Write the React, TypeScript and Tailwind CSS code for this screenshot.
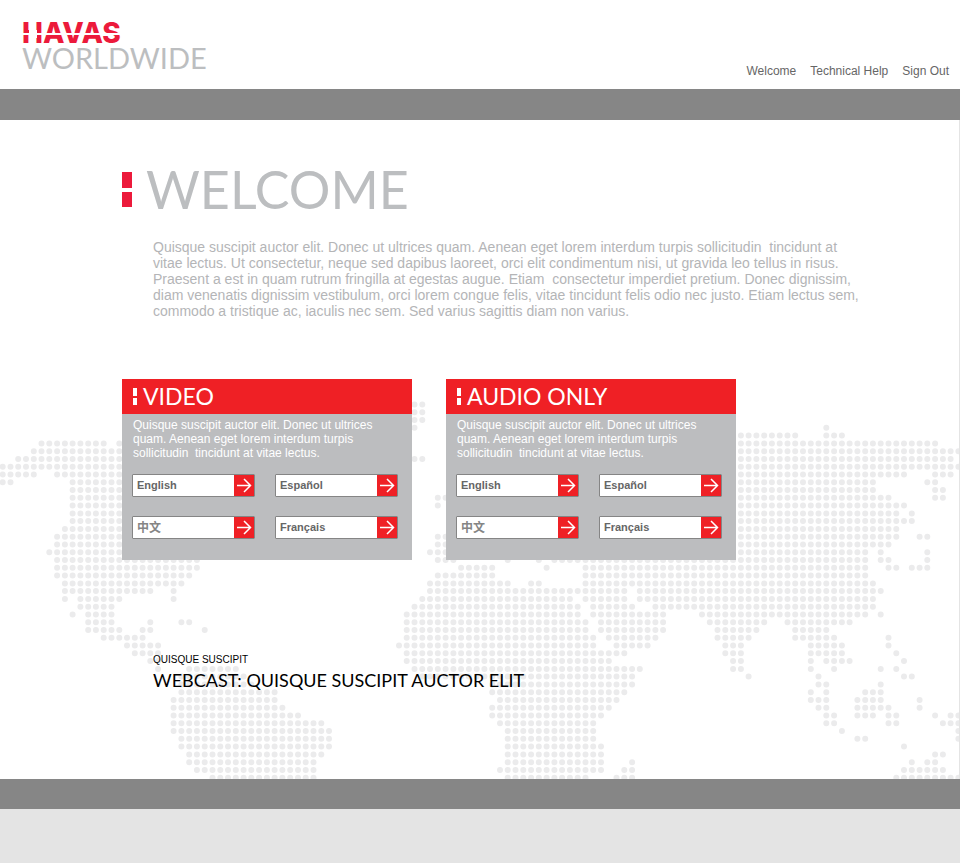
const RUNS: Record<number, string> = {
  [-5]: "53-54", [-4]: "53-54", [-3]: "53-54",
  [-2]: "53 106", [-1]: "95-102 106-108",
  0: "5-13 15 95-120", 1: "4-15 95-123", 2: "2-15 53-54 95-122", 3: "0-15 95-123",
  4: "0-4 7-15 95-116 120-122", 5: "0-1 9-15 95-112 119-120", 6: "9-15 95-112 120-121",
  7: "9-15 56-57 95-114 120-121", 8: "9-15 56 95-116", 9: "9-15 95-115 117", 10: "9-15 95-117",
  11: "8-15 95-115", 12: "7-15 56-57 95-115 118-119", 13: "7-15 56-57 95-114",
  14: "6-15 55-57 95-111 113 119",
  15: "7-25 56-58 65 69 71-111 113-114 119",
  16: "7-25 59-63 70 75-111 114-115 117-119",
  17: "7-24 56-63 75-111", 18: "8-23 55-65 68-69 75-112",
  19: "8-19 22 55-80 82-113", 20: "8 10-15 22 54-73 75-80 82-112",
  21: "10-14 53-74 76-81 84-112", 22: "9 11-14 52-74 76-85 90-111 113",
  23: "11-14 19 23-24 52-75 77-85 91-98 101-109",
  24: "11-15 18-19 26 52-75 77-85 92-97 102-106",
  25: "13-18 52-76 78-84 92-96 102-107 114",
  26: "16-20 51-76 79-83 93-95 104-108 114",
  27: "17-20 52-80 93-95 104-108 115", 28: "19-20 52-78 94-95 104 106-109 116",
  29: "20 24-30 53-82 94-95 104 107 113 115",
  30: "23-31 54-81 96 105 116-117", 31: "23-32 63-81 105-106 113",
  32: "23-35 63-80 104 106 111-113", 33: "22-35 64-79 104-106 110-113 118",
  34: "22-36 63-78 105-106 110-114 118", 35: "22-38 63-77 106-107 110-112 114-115 120 122-123",
  36: "22-41 64-76 106-107 114-115 121-123", 37: "22-42 65-76 108 123",
  38: "23-42 65-76 110-111 123", 39: "23-42 65-77 116", 40: "24-41 65-77 120-121",
  41: "24-40 65-77 81 117 119-120", 42: "25-40 64-77 80-81 116-121",
  43: "27-40 65-75 79-81 115-123",
};

function mapPath() {
  const parts: string[] = [];
  for (const [row, runs] of Object.entries(RUNS)) {
    const y = (323.4 + Number(row) * 7.775).toFixed(1);
    for (const run of runs.split(" ")) {
      const [from, to = from] = run.split("-").map(Number);
      for (let c = from; c <= to; c++) parts.push(`M${(2.7 + c * 7.77).toFixed(1)} ${y}h0`);
    }
  }
  return parts.join("");
}

const MAP = mapPath();

function WorldMap() {
  return (
    <svg aria-hidden="true" className="absolute inset-0 h-full w-full" fill="none">
      <path d={MAP} stroke="#ebebec" strokeWidth="6" strokeLinecap="round" />
    </svg>
  );
}

function Logo() {
  return (
    <span className="relative block">
      <span className="block font-['Inter',sans-serif] text-[28px] leading-[25px] font-extrabold text-[#ec1a3b]">HAVAS</span>
      <span className="block font-['Lato',sans-serif] text-[29px] leading-6 text-[#bcbec0]">WORLDWIDE</span>
      <span className="absolute top-3 left-0 h-[2px] w-[106px] bg-white" />
      <span className="absolute top-[9px] left-[7px] h-2 w-2 bg-white" />
    </span>
  );
}

function Arrow() {
  return (
    <span className="flex w-5 items-center justify-center bg-[#ef2025]">
      <svg aria-hidden="true" width="16" height="15" viewBox="0 0 16 15" fill="none" stroke="#fff" strokeWidth="1.500">
        <path d="M1 7.500h13M8 1l6.500 6.500L8 14" />
      </svg>
    </span>
  );
}

const LANGUAGES = ["English", "Español", "中文", "Français"];

function Card({ title }: { title: string }) {
  return (
    <section className="w-[290px] bg-[#bcbdbf] pb-[21px]">
      <h2 className="flex h-[35px] items-center gap-[6px] bg-[#ef2025] pl-[11px] font-['Lato',sans-serif] text-[23px] font-normal text-white">
        <span aria-hidden="true" className="flex flex-col gap-[2px]">
          <span className="h-2 w-1 bg-white" />
          <span className="h-[7px] w-1 bg-white" />
        </span>
        {title}
      </h2>
      <p className="mt-1 pr-6 pl-[11px] text-[12px] leading-[14px] whitespace-pre-line text-white">
        Quisque suscipit auctor elit. Donec ut ultrices{"\n"}quam. Aenean eget lorem interdum turpis{"\n"}sollicitudin&nbsp; tincidunt at vitae lectus.
      </p>
      <div className="mt-[14px] grid grid-cols-2 gap-x-5 gap-y-[19px] pr-[14px] pl-[10px]">
        {LANGUAGES.map((name) => (
          <button key={name} className="flex h-[23px] rounded-[1px] border border-[#858585] bg-white text-left">
            <span
              className={
                name === "中文"
                  ? "flex h-full flex-1 items-center pl-1 text-[12px] font-bold text-[#858585]"
                  : "flex h-full flex-1 items-center pl-1 text-[11px] font-bold text-[#666]"
              }
            >
              {name}
            </span>
            <Arrow />
          </button>
        ))}
      </div>
    </section>
  );
}

export default function App() {
  return (
    <div className="min-h-screen bg-[#e4e4e4] font-['Liberation_Sans','Noto_Sans_CJK_SC',sans-serif]">
      <header className="flex h-[89px] items-end justify-between bg-white pr-[11px] pb-[11px] pl-[22px]">
        <a href="#home" className="mb-2"><Logo /></a>
        <nav className="flex gap-[14px] text-[12px] leading-[14px] text-[#666]">
          <a href="#welcome">Welcome</a>
          <a href="#help">Technical Help</a>
          <a href="#signout">Sign Out</a>
        </nav>
      </header>
      <div className="h-[31px] bg-[#868686]" />
      <main className="relative overflow-hidden border-r border-[#e4e4e4] bg-white pb-[89px] pl-[122px]">
        <WorldMap />
        <div className="relative">
          <h1 className="flex items-center gap-[14px] pt-[39px] font-['Lato',sans-serif] text-[52px] leading-[60px] font-normal text-[#bcbec0]">
            <span aria-hidden="true" className="flex flex-col gap-[4px]">
              <span className="h-4 w-[10px] bg-[#ec1a3b]" />
              <span className="h-[15px] w-[10px] bg-[#ec1a3b]" />
            </span>
            WELCOME
          </h1>
          <p className="mt-5 pl-[31px] text-[14px] leading-4 whitespace-pre-line text-[#b4b5b7]">
            Quisque suscipit auctor elit. Donec ut ultrices quam. Aenean eget lorem interdum turpis sollicitudin&nbsp; tincidunt at{"\n"}vitae lectus. Ut consectetur, neque sed dapibus laoreet, orci elit condimentum nisi, ut gravida leo tellus in risus.{"\n"}Praesent a est in quam rutrum fringilla at egestas augue. Etiam&nbsp; consectetur imperdiet pretium. Donec dignissim,{"\n"}diam venenatis dignissim vestibulum, orci lorem congue felis, vitae tincidunt felis odio nec justo. Etiam lectus sem,{"\n"}commodo a tristique ac, iaculis nec sem. Sed varius sagittis diam non varius.
          </p>
          <div className="mt-[60px] flex flex-wrap gap-[34px]">
            <Card title="VIDEO" />
            <Card title="AUDIO ONLY" />
          </div>
          <div className="mt-[94px] pl-[31px] text-black">
            <p className="text-[10px] leading-3">QUISQUE SUSCIPIT</p>
            <p className="mt-1 font-['Lato',sans-serif] text-[18px] leading-5">WEBCAST: QUISQUE SUSCIPIT AUCTOR ELIT</p>
          </div>
        </div>
      </main>
      <footer className="h-[30px] bg-[#868686]" />
    </div>
  );
}
